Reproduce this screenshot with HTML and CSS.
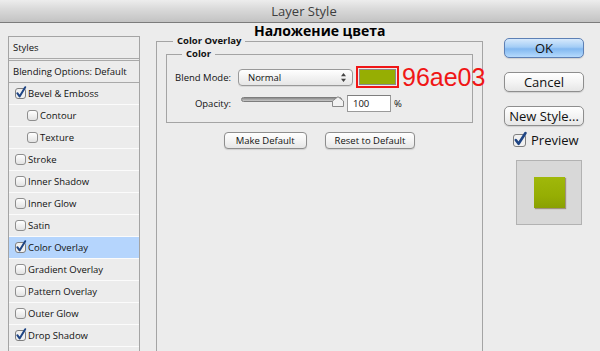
FILE: index.html
```html
<!DOCTYPE html>
<html lang="en">
<head>
    <meta charset="UTF-8">
    <meta name="viewport" content="width=device-width, initial-scale=1.0">
    <title>Layer Style</title>
    <link rel="stylesheet" href="styles.css">
</head>
<body>
<div class="window">
    <div class="titlebar">Layer Style</div>

    <div class="dialog">
        <!-- Styles list -->
        <ul class="styles">
            <li class="styles__head">Styles</li>
            <li class="styles__blend">Blending Options: Default</li>
            <li class="styles__item">
                <svg class="cb cb--on" width="11" height="11" viewBox="0 0 11 11"><rect x="0.5" y="0.5" width="10" height="10" rx="2.5"/><path d="M2.3 5.2 L4.6 8.4 L10.2 -0.8"/></svg>Bevel &amp; Emboss
            </li>
            <li class="styles__item styles__item--sub"><span class="cb"></span>Contour</li>
            <li class="styles__item styles__item--sub"><span class="cb"></span>Texture</li>
            <li class="styles__item"><span class="cb"></span>Stroke</li>
            <li class="styles__item"><span class="cb"></span>Inner Shadow</li>
            <li class="styles__item"><span class="cb"></span>Inner Glow</li>
            <li class="styles__item"><span class="cb"></span>Satin</li>
            <li class="styles__item styles__item--active">
                <svg class="cb cb--on" width="11" height="11" viewBox="0 0 11 11"><rect x="0.5" y="0.5" width="10" height="10" rx="2.5"/><path d="M2.3 5.2 L4.6 8.4 L10.2 -0.8"/></svg>Color Overlay
            </li>
            <li class="styles__item"><span class="cb"></span>Gradient Overlay</li>
            <li class="styles__item"><span class="cb"></span>Pattern Overlay</li>
            <li class="styles__item"><span class="cb"></span>Outer Glow</li>
            <li class="styles__item">
                <svg class="cb cb--on" width="11" height="11" viewBox="0 0 11 11"><rect x="0.5" y="0.5" width="10" height="10" rx="2.5"/><path d="M2.3 5.2 L4.6 8.4 L10.2 -0.8"/></svg>Drop Shadow
            </li>
        </ul>

        <!-- Color Overlay settings -->
        <div class="content">
            <fieldset class="group">
                <legend class="group__title">Color Overlay</legend>
                <fieldset class="group group--inner">
                    <legend class="group__title group__title--inner">Color</legend>
                    <div class="field">
                        <label class="field__label">Blend Mode:</label>
                        <div class="select">
                            <span>Normal</span>
                            <svg class="select__arrows" width="5" height="9" viewBox="0 0 5 9"><path d="M2.5 0 L5 3.3 H0 Z M2.5 9 L5 5.7 H0 Z"/></svg>
                        </div>
                        <div class="swatch"><div class="swatch__color"></div></div>
                        <span class="hex">96ae03</span>
                    </div>
                    <div class="field field--small">
                        <label class="field__label field__label--opacity">Opacity:</label>
                        <div class="slider">
                            <div class="slider__track"></div>
                            <svg class="slider__thumb" width="12" height="11" viewBox="0 0 12 11"><path d="M0.5 10.5 V5 L6 0.7 L11.5 5 V10.5 Z"/></svg>
                        </div>
                        <div class="number">100</div>
                        <span class="unit">%</span>
                    </div>
                </fieldset>
                <div class="actions">
                    <button class="btn btn--small">Make Default</button>
                    <button class="btn btn--small">Reset to Default</button>
                </div>
            </fieldset>
            <h1 class="note">Наложение цвета</h1>
        </div>

        <!-- Dialog buttons -->
        <div class="side">
            <button class="btn btn--big btn--default">OK</button>
            <button class="btn btn--big">Cancel</button>
            <button class="btn btn--big">New Style...</button>
            <div class="preview">
                <svg class="cb cb--on cb--big" width="14" height="14" viewBox="0 0 14 14"><rect x="0.5" y="1.5" width="12" height="12" rx="2.5"/><path d="M2.8 7 L5.6 10.8 L12.5 0"/></svg>
                Preview
            </div>
            <div class="thumb">
                <div class="thumb__square"></div>
            </div>
        </div>
    </div>
</div>
</body>
</html>
```

FILE: styles.css
```css
:root {
    /* COLORS */
    --bg: #ececec;
    --line: #a4a4a4;
    --text: #111;
    --green: #96ae03;
    --red: #f01616;

    font-family: "Open Sans", "DejaVu Sans", sans-serif;
    font-size: 9.5px;
    color: var(--text);
}

body {
    margin: 0;
    background-color: var(--bg);
    overflow: hidden;
}

.window {
    width: 600px;
    height: 351px;
    display: flex;
    flex-direction: column;
    overflow: hidden;
}

.titlebar {
    flex: none;
    height: 22px;
    line-height: 22px;
    border-bottom: 1px solid #7c7c7c;
    background-image: linear-gradient(#ededed, #dadada 40%, #c3c3c3);
    text-align: center;
    padding-left: 8px;
    font-size: 13px;
    color: #3d3d3d;
}

.dialog {
    flex: 1;
    display: flex;
    min-height: 0;
}

/* Styles list */
.styles {
    list-style: none;
    margin: 13px 0 0 8px;
    padding: 0;
    width: 132px;
    box-sizing: border-box;
    border: 1px solid var(--line);
    border-bottom: none;
    line-height: 21px;
}

.styles__head {
    padding-left: 4px;
    border-bottom: 1px solid #a9a9a9;
}

.styles__blend {
    margin-top: 1px;
    padding-left: 4px;
    border-top: 1px solid #a9a9a9;
    border-bottom: 1px solid #a9a9a9;
}

.styles__item {
    display: flex;
    align-items: center;
    gap: 2px;
    height: 21px;
    padding-left: 6px;
    border-bottom: 1px solid #fbfbfb;
}

.styles__item--sub {
    padding-left: 18px;
}

.styles__item--active {
    background-color: #b5d5fd;
}

.cb {
    display: inline-block;
    flex: none;
    width: 11px;
    height: 11px;
    box-sizing: border-box;
    border: 1px solid #8e8e8e;
    border-radius: 3px;
    background-image: linear-gradient(#ffffff, #e2e2e2);
}

svg.cb {
    border: none;
    background: none;
    overflow: visible;
}

.cb--on rect {
    fill: #f1f1f1;
    stroke: #7f7f7f;
}

.cb--on path {
    fill: none;
    stroke: #1f4584;
    stroke-width: 2;
    stroke-linecap: round;
    stroke-linejoin: round;
}

.cb--big {
    width: 14px;
    height: 14px;
}

.cb--big path {
    stroke-width: 2.6;
}

/* Settings */
.content {
    position: relative;
    margin: 12px 0 0 16px;
    display: flex;
    flex-direction: column;
}

.group {
    flex: 1;
    margin: 0;
    padding: 0;
    width: 327px;
    box-sizing: border-box;
    border: 1px solid var(--line);
    border-bottom: none;
    min-inline-size: 0;
}

.group--inner {
    flex: none;
    width: auto;
    margin: 1px 9px 0;
    padding: 6px 0 10px;
    border-bottom: 1px solid var(--line);
}

.group__title {
    margin-left: 16px;
    padding: 0 4px;
    font-weight: bold;
    line-height: 12px;
}

.group__title--inner {
    margin-left: 15px;
}

.field {
    display: flex;
    align-items: center;
    height: 22px;
}

.field > * {
    flex: none;
}

.field--small {
    height: 17px;
    margin-top: 7px;
}

.field__label {
    width: 64px;
    margin-right: 7px;
    text-align: right;
}

.field__label--opacity {
    margin-right: 10px;
}

.select {
    width: 115px;
    height: 17px;
    box-sizing: border-box;
    display: flex;
    align-items: center;
    justify-content: space-between;
    padding: 0 6px 0 9px;
    border: 1px solid #999;
    border-radius: 4px;
    background-image: linear-gradient(#ffffff, #f2f2f2 50%, #e6e6e6);
    box-shadow: 0 1px 0 rgba(0, 0, 0, 0.08);
}

.select__arrows {
    fill: #444;
}

.swatch {
    margin-left: 3px;
    width: 43px;
    height: 22px;
    box-sizing: border-box;
    border: 2px solid var(--red);
    padding: 1px;
}

.swatch__color {
    height: 100%;
    box-sizing: border-box;
    border: 1px solid #8a8a8a;
    background-color: var(--green);
}

.hex {
    margin-left: 3px;
    font-family: "Liberation Sans", Arial, sans-serif;
    font-size: 25px;
    line-height: 22px;
    color: var(--red);
}

.slider {
    position: relative;
    width: 101px;
    height: 17px;
}

.slider__track {
    margin-top: 2px;
    height: 5px;
    box-sizing: border-box;
    border: 1px solid #7d7d7d;
    border-radius: 3px;
    background-image: linear-gradient(#8a8a8a, #c9c9c9);
}

.slider__thumb {
    position: absolute;
    left: 91px;
    top: 1px;
}

.slider__thumb path {
    fill: #f2f2f2;
    stroke: #8a8a8a;
}

.number {
    margin-left: 5px;
    width: 44px;
    height: 17px;
    box-sizing: border-box;
    padding-left: 5px;
    line-height: 15px;
    border: 1px solid #9a9a9a;
    border-top-color: #7e7e7e;
    background-color: #fff;
}

.unit {
    margin-left: 3px;
}

.actions {
    display: flex;
    justify-content: center;
    gap: 18px;
    margin-top: 9px;
}

.btn {
    font-family: inherit;
    color: var(--text);
    border: 1px solid #8e8e8e;
    border-radius: 4px;
    background-image: linear-gradient(#ffffff, #f4f4f4 50%, #e6e6e6);
    box-shadow: 0 1px 1px rgba(0, 0, 0, 0.12);
    padding: 0;
    cursor: pointer;
}

.btn--small {
    height: 17px;
    min-width: 83px;
    padding: 0 9px;
    font-size: 9.5px;
    line-height: 15px;
}

.note {
    position: absolute;
    left: 95px;
    top: -12px;
    margin: 0;
    padding: 0 3px;
    background-color: var(--bg);
    font-size: 14px;
    line-height: 16px;
    font-weight: bold;
    color: #000;
}

/* Dialog buttons */
.side {
    width: 80px;
    margin: 15px 0 0 21px;
    display: flex;
    flex-direction: column;
    gap: 14px;
}

.btn--big {
    height: 20px;
    font-size: 13px;
    line-height: 18px;
    border-radius: 5px;
}

.btn--default {
    border-color: #5d80b5;
    background-image: linear-gradient(#d6e9fc, #a3cdf6 45%, #82b8f0 55%, #b5dafd);
}

.preview {
    display: flex;
    align-items: center;
    gap: 4px;
    margin: -8px 0 0 9px;
    font-size: 13px;
    line-height: 16px;
}

.thumb {
    margin: -2px 0 0 12px;
    width: 66px;
    height: 65px;
    box-sizing: border-box;
    border: 1px solid #b2b2b2;
    background-color: #d8d8d8;
    display: flex;
    align-items: center;
    justify-content: center;
}

.thumb__square {
    width: 31px;
    height: 31px;
    background-image: linear-gradient(#a0b80a, var(--green) 60%, #8aa002);
    box-shadow: 1px 1px 1px rgba(90, 60, 20, 0.45);
}
```
